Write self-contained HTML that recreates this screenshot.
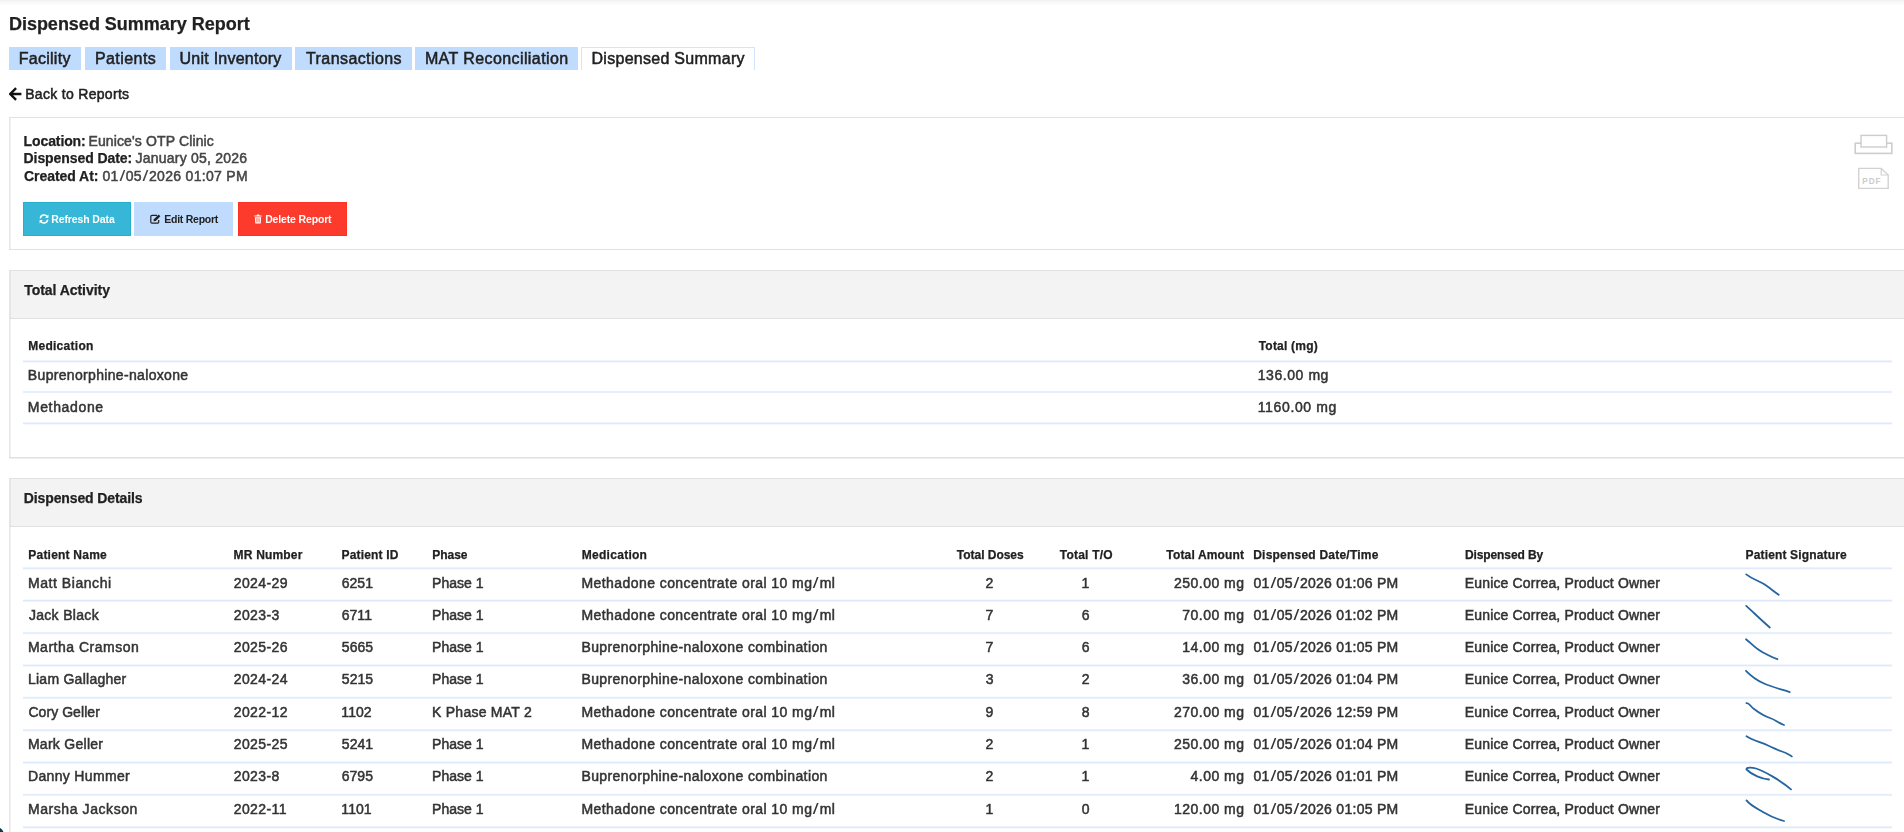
<!DOCTYPE html>
<html lang="en">
<head>
<meta charset="utf-8">
<title>Dispensed Summary Report</title>
<style>
*{box-sizing:border-box;}
html,body{margin:0;padding:0;background:#fff;}
body{width:1904px;height:832px;overflow:hidden;position:relative;font-family:"Liberation Sans",Arial,sans-serif;color:#212121;font-size:14px;}
.t{position:absolute;white-space:nowrap;display:block;-webkit-text-stroke:0.5px;}
.sl{font-style:normal;display:inline-block;text-align:center;transform:scaleX(1.5);letter-spacing:0;-webkit-text-stroke:0;}
.t.b{-webkit-text-stroke:0.25px;font-weight:bold;}
.topstrip{position:absolute;left:0;top:0;width:1904px;height:6px;background:linear-gradient(#f0f0f0 0,#f9f9f9 45%,#ffffff 100%);}
.tab{position:absolute;top:47px;height:23px;line-height:23px;font-size:16px;background:#bfdbfe;color:#212121;text-align:center;white-space:nowrap;}
.tab.active{background:#fff;border:1px solid #d3e5fd;border-bottom:none;line-height:21px;}
.panel{position:absolute;left:9px;width:1920px;border:1px solid #e1e1e1;border-left-color:#e6e6e6;background:#fff;}
.lb{position:absolute;left:0;top:0;bottom:0;width:1px;background:rgba(0,0,0,0.05);z-index:2;}
.phead{position:absolute;left:0;top:0;width:100%;height:48px;background:#f3f3f3;border-bottom:1px solid #e0e0e0;}
.btn{position:absolute;top:202px;height:34px;}
.ln{position:absolute;left:23px;width:1869px;height:1px;}
.ico{position:absolute;}
</style>
</head>
<body>
<div class="topstrip"></div>

<div class="tab" style="left:9px;width:72px;"></div>
<div class="tab" style="left:85px;width:81px;"></div>
<div class="tab" style="left:170px;width:122px;"></div>
<div class="tab" style="left:295px;width:117px;"></div>
<div class="tab" style="left:415px;width:163px;"></div>
<div class="tab active" style="left:581px;width:174px;"></div>

<!-- back arrow -->
<svg class="ico" style="left:9px;top:87px" width="13" height="14" viewBox="0 0 13 14"><path d="M7.1 1.1 L1.2 7 L7.1 12.9 M1.8 7 H12.4" fill="none" stroke="#111" stroke-width="2.4"/></svg>

<!-- Report info panel -->
<div class="panel" style="top:117px;height:133px;"><div class="lb"></div></div>
<div class="btn" style="left:23px;width:108px;background:#36b7d7;border:1px solid #27afd2;"></div>
<div class="btn" style="left:134px;width:99px;background:#bfdbfe;"></div>
<div class="btn" style="left:238px;width:109px;background:#fd3b2c;border:1px solid #fd3224;"></div>

<!-- Total Activity panel -->
<div class="panel" style="top:270px;height:188px;box-shadow:0 1px 0 #f0f0f0;"><div class="phead"></div><div class="lb"></div></div>
<div class="ln" style="top:360px;background:#eff5fe"></div>
<div class="ln" style="top:361px;background:#dde9fc"></div>
<div class="ln" style="top:362px;background:#f4f8fe"></div>
<div class="ln" style="top:390px;background:#fdfeff"></div>
<div class="ln" style="top:391px;background:#e6effd"></div>
<div class="ln" style="top:392px;background:#e6effd"></div>
<div class="ln" style="top:393px;background:#fdfeff"></div>
<div class="ln" style="top:422px;background:#eff5fe"></div>
<div class="ln" style="top:423px;background:#dde9fc"></div>
<div class="ln" style="top:424px;background:#f4f8fe"></div>

<!-- Dispensed Details panel -->
<div class="panel" style="top:478px;height:400px;"><div class="phead"></div><div class="lb"></div></div>
<div class="ln" style="top:567px;background:#edf3fd"></div>
<div class="ln" style="top:568px;background:#dfeafc"></div>
<div class="ln" style="top:569px;background:#f6f9fe"></div>
<div class="ln" style="top:599px;background:#f5f9fe"></div>
<div class="ln" style="top:600px;background:#deeafc"></div>
<div class="ln" style="top:601px;background:#edf4fd"></div>
<div class="ln" style="top:631px;background:#fefeff"></div>
<div class="ln" style="top:632px;background:#e7f0fd"></div>
<div class="ln" style="top:633px;background:#e5eefd"></div>
<div class="ln" style="top:634px;background:#fcfdff"></div>
<div class="ln" style="top:664px;background:#f0f5fe"></div>
<div class="ln" style="top:665px;background:#dce8fc"></div>
<div class="ln" style="top:666px;background:#f3f7fe"></div>
<div class="ln" style="top:696px;background:#f8fbfe"></div>
<div class="ln" style="top:697px;background:#e1ecfc"></div>
<div class="ln" style="top:698px;background:#eaf2fd"></div>
<div class="ln" style="top:729px;background:#eaf1fd"></div>
<div class="ln" style="top:730px;background:#e2ecfc"></div>
<div class="ln" style="top:731px;background:#f9fbfe"></div>
<div class="ln" style="top:761px;background:#f2f7fe"></div>
<div class="ln" style="top:762px;background:#dce8fc"></div>
<div class="ln" style="top:763px;background:#f0f5fe"></div>
<div class="ln" style="top:793px;background:#fbfcff"></div>
<div class="ln" style="top:794px;background:#e4eefd"></div>
<div class="ln" style="top:795px;background:#e8f0fd"></div>
<div class="ln" style="top:826px;background:#edf3fd"></div>
<div class="ln" style="top:827px;background:#dfeafc"></div>
<div class="ln" style="top:828px;background:#f6f9fe"></div>

<div style="position:absolute;left:-12.5px;top:826.6px;width:16.8px;height:16.8px;border-radius:50%;background:#0e3b3f;"></div>
<!-- refresh icon -->
<svg class="ico" style="left:39px;top:214px" width="10" height="10" viewBox="0 0 10 10"><path d="M1.3 4.3 A3.8 3.8 0 0 1 8.2 2.6 M8.7 5.7 A3.8 3.8 0 0 1 1.8 7.4" fill="none" stroke="#fff" stroke-width="1.5"/><path d="M9.4 0.6 V3.9 H6.1 Z M0.6 9.4 V6.1 H3.9 Z" fill="#fff"/></svg>
<!-- edit icon -->
<svg class="ico" style="left:150px;top:214px" width="11" height="10" viewBox="0 0 11 10"><path d="M7 1.3 H2 A1.2 1.2 0 0 0 0.8 2.5 V8 A1.2 1.2 0 0 0 2 9.2 H7.5 A1.2 1.2 0 0 0 8.7 8 V6" fill="none" stroke="#212121" stroke-width="1.2"/><path d="M3.9 5.2 L8.6 0.5 L10.4 2.3 L5.7 7 L3.6 7.3 Z" fill="#212121"/></svg>
<!-- trash icon -->
<svg class="ico" style="left:254px;top:214px" width="8" height="10" viewBox="0 0 8 10"><path d="M0.3 1.5 H2.5 L3 0.6 H5 L5.5 1.5 H7.7 V2.6 H0.3 Z M0.9 3.2 H7.1 L6.7 9.4 H1.3 Z" fill="#fff"/><path d="M2.7 4.2 V8.4 M4 4.2 V8.4 M5.3 4.2 V8.4" stroke="#fe3a2c" stroke-width="0.6"/></svg>
<!-- printer icon -->
<svg class="ico" style="left:1853px;top:133px" width="40" height="22" viewBox="0 0 40 22"><rect x="2.2" y="10.2" width="36.6" height="10.2" fill="#fff" stroke="#cdcdcd" stroke-width="1.6"/><rect x="8" y="2.4" width="25.6" height="11.6" fill="#fff" stroke="#cdcdcd" stroke-width="1.4"/></svg>
<!-- pdf icon -->
<svg class="ico" style="left:1857px;top:167px" width="33" height="23" viewBox="0 0 33 23"><path d="M1.7 1.4 H24.2 L31.2 8 V21.4 H1.7 Z" fill="#fff" stroke="#d2d2d2" stroke-width="1.4"/><path d="M24.2 1.4 V8 H31.2" fill="none" stroke="#d2d2d2" stroke-width="1.2"/><text x="5.2" y="17" font-family="Liberation Sans,Arial,sans-serif" font-weight="bold" font-size="8.2" fill="#cbcbcb" letter-spacing="1">PDF</text></svg>
<!-- signatures -->
<svg class="ico" style="left:1740px;top:570px" width="60" height="262" viewBox="1740 570 60 262" fill="none" stroke="#2565a0" stroke-width="1.8" stroke-linecap="round" stroke-linejoin="round">
<path d="M1746.2 574.4 C1752 579 1758 580.5 1763 583.5 S1772 590 1778.7 594.8"/>
<path d="M1746.2 605.9 C1752 611 1760 619 1769.8 627.5"/>
<path d="M1746 639.2 C1751 643 1755 648.5 1763 652.5 S1771 657 1777.4 659.2"/>
<path d="M1746 670.8 C1751 676 1756 680 1764 683.5 S1780 689 1789.7 692.1"/>
<path d="M1746.5 703.2 C1749 702.5 1750 706 1754 709 S1764 716 1770 718 S1778 723 1784 725"/>
<path d="M1746.5 736.2 C1752 740 1760 742 1768 745.5 S1778 750.5 1782 751.5 S1788 754 1791.8 756.4"/>
<path d="M1769 779.5 C1762 779 1752 775 1746.5 769.5 C1746 767 1752 767.3 1756 768.5 C1764 771 1780 780 1791 789.4"/>
<path d="M1746.5 800.4 C1750 805 1756 808 1762 811.5 S1774 818.5 1784 821"/>
</svg>


<div id="tx" style="position:absolute;left:0;top:0;width:1904px;height:832px;will-change:transform;">
<span class="t b" style="left:8.90px;top:13px;font-size:18px;line-height:23px;color:#212121;letter-spacing:-0.006px;">Dispensed Summary Report</span>
<span class="t" style="left:18.69px;top:48px;font-size:16px;line-height:21px;color:#212121;letter-spacing:0.280px;">Facility</span>
<span class="t" style="left:94.89px;top:48px;font-size:16px;line-height:21px;color:#212121;letter-spacing:0.454px;">Patients</span>
<span class="t" style="left:179.57px;top:48px;font-size:16px;line-height:21px;color:#212121;letter-spacing:0.235px;">Unit Inventory</span>
<span class="t" style="left:306.04px;top:48px;font-size:16px;line-height:21px;color:#212121;letter-spacing:0.412px;">Transactions</span>
<span class="t" style="left:424.89px;top:48px;font-size:16px;line-height:21px;color:#212121;letter-spacing:0.407px;">MAT Reconciliation</span>
<span class="t" style="left:591.49px;top:48px;font-size:16px;line-height:21px;color:#212121;letter-spacing:0.284px;">Dispensed Summary</span>
<span class="t" style="left:25.15px;top:85px;font-size:14px;line-height:18px;color:#212121;letter-spacing:0.311px;">Back to Reports</span>
<span class="t b" style="left:23.56px;top:132px;font-size:14px;line-height:18px;color:#212121;letter-spacing:-0.101px;">Location:</span>
<span class="t" style="left:88.45px;top:132px;font-size:14px;line-height:18px;color:#444;letter-spacing:0.131px;">Eunice's OTP Clinic</span>
<span class="t b" style="left:23.56px;top:149px;font-size:14px;line-height:18px;color:#212121;letter-spacing:-0.080px;">Dispensed Date:</span>
<span class="t" style="left:135.58px;top:149px;font-size:14px;line-height:18px;color:#444;letter-spacing:0.223px;">January 05, 2026</span>
<span class="t b" style="left:23.93px;top:167px;font-size:14px;line-height:18px;color:#212121;letter-spacing:-0.043px;">Created At:</span>
<span class="t" style="left:102.45px;top:167px;font-size:14px;line-height:18px;color:#444;letter-spacing:0.306px;">01<i class="sl" style="width:7.10px">/</i>05<i class="sl" style="width:7.10px">/</i>2026 01:07 PM</span>
<span class="t b" style="left:51.20px;top:212px;font-size:10.5px;line-height:14px;color:#ffffff;-webkit-text-stroke:0;letter-spacing:-0.113px;">Refresh Data</span>
<span class="t b" style="left:164.30px;top:212px;font-size:10.5px;line-height:14px;color:#212121;-webkit-text-stroke:0;letter-spacing:-0.255px;">Edit Report</span>
<span class="t b" style="left:265.20px;top:212px;font-size:10.5px;line-height:14px;color:#ffffff;-webkit-text-stroke:0;letter-spacing:-0.153px;">Delete Report</span>
<span class="t b" style="left:24.24px;top:281px;font-size:14px;line-height:18px;color:#212121;letter-spacing:-0.049px;">Total Activity</span>
<span class="t b" style="left:28.20px;top:338px;font-size:12px;line-height:16px;color:#212121;letter-spacing:0.275px;">Medication</span>
<span class="t b" style="left:1258.67px;top:338px;font-size:12px;line-height:16px;color:#212121;letter-spacing:0.226px;">Total (mg)</span>
<span class="t" style="left:27.85px;top:366px;font-size:14px;line-height:18px;color:#333333;letter-spacing:0.330px;">Buprenorphine-naloxone</span>
<span class="t" style="left:27.85px;top:398px;font-size:14px;line-height:18px;color:#333333;letter-spacing:0.652px;">Methadone</span>
<span class="t" style="left:1257.73px;top:366px;font-size:14px;line-height:18px;color:#333333;letter-spacing:0.564px;">136.00 mg</span>
<span class="t" style="left:1257.73px;top:398px;font-size:14px;line-height:18px;color:#333333;letter-spacing:0.640px;">1160.00 mg</span>
<span class="t b" style="left:23.76px;top:489px;font-size:14px;line-height:18px;color:#212121;letter-spacing:-0.112px;">Dispensed Details</span>
<span class="t b" style="left:28.30px;top:547px;font-size:12px;line-height:16px;color:#212121;letter-spacing:0.217px;">Patient Name</span>
<span class="t b" style="left:233.60px;top:547px;font-size:12px;line-height:16px;color:#212121;letter-spacing:0.181px;">MR Number</span>
<span class="t b" style="left:341.50px;top:547px;font-size:12px;line-height:16px;color:#212121;letter-spacing:0.185px;">Patient ID</span>
<span class="t b" style="left:432.30px;top:547px;font-size:12px;line-height:16px;color:#212121;letter-spacing:-0.036px;">Phase</span>
<span class="t b" style="left:581.80px;top:547px;font-size:12px;line-height:16px;color:#212121;letter-spacing:0.275px;">Medication</span>
<span class="t b" style="left:956.77px;top:547px;font-size:12px;line-height:16px;color:#212121;letter-spacing:-0.020px;">Total Doses</span>
<span class="t b" style="left:1059.77px;top:547px;font-size:12px;line-height:16px;color:#212121;letter-spacing:0.229px;">Total T/O</span>
<span class="t b" style="left:1166.37px;top:547px;font-size:12px;line-height:16px;color:#212121;letter-spacing:0.150px;">Total Amount</span>
<span class="t b" style="left:1253.20px;top:547px;font-size:12px;line-height:16px;color:#212121;letter-spacing:0.225px;">Dispensed Date/Time</span>
<span class="t b" style="left:1464.90px;top:547px;font-size:12px;line-height:16px;color:#212121;letter-spacing:-0.099px;">Dispensed By</span>
<span class="t b" style="left:1745.50px;top:547px;font-size:12px;line-height:16px;color:#212121;letter-spacing:0.158px;">Patient Signature</span>
<span class="t" style="left:27.95px;top:574px;font-size:14px;line-height:18px;color:#333333;letter-spacing:0.560px;">Matt Bianchi</span>
<span class="t" style="left:233.70px;top:574px;font-size:14px;line-height:18px;color:#333333;letter-spacing:0.420px;">2024-29</span>
<span class="t" style="left:341.69px;top:574px;font-size:14px;line-height:18px;color:#333333;letter-spacing:0.050px;">6251</span>
<span class="t" style="left:432.05px;top:574px;font-size:14px;line-height:18px;color:#333333;letter-spacing:0.027px;">Phase 1</span>
<span class="t" style="left:581.45px;top:574px;font-size:14px;line-height:18px;color:#333333;letter-spacing:0.432px;">Methadone concentrate oral 10 mg<i class="sl" style="width:7.22px">/</i>ml</span>
<span class="t" style="left:985.61px;top:574px;font-size:14px;line-height:18px;color:#333333;">2</span>
<span class="t" style="left:1081.52px;top:574px;font-size:14px;line-height:18px;color:#333333;">1</span>
<span class="t" style="left:1174.00px;top:574px;font-size:14px;line-height:18px;color:#333333;letter-spacing:0.480px;">250.00 mg</span>
<span class="t" style="left:1253.45px;top:574px;font-size:14px;line-height:18px;color:#333333;letter-spacing:0.284px;">01<i class="sl" style="width:7.08px">/</i>05<i class="sl" style="width:7.08px">/</i>2026 01:06 PM</span>
<span class="t" style="left:1464.75px;top:574px;font-size:14px;line-height:18px;color:#333333;letter-spacing:0.164px;">Eunice Correa, Product Owner</span>
<span class="t" style="left:28.88px;top:606px;font-size:14px;line-height:18px;color:#333333;letter-spacing:0.321px;">Jack Black</span>
<span class="t" style="left:233.70px;top:606px;font-size:14px;line-height:18px;color:#333333;letter-spacing:0.420px;">2023-3</span>
<span class="t" style="left:341.69px;top:606px;font-size:14px;line-height:18px;color:#333333;letter-spacing:0.050px;">6711</span>
<span class="t" style="left:432.05px;top:606px;font-size:14px;line-height:18px;color:#333333;letter-spacing:0.027px;">Phase 1</span>
<span class="t" style="left:581.45px;top:606px;font-size:14px;line-height:18px;color:#333333;letter-spacing:0.432px;">Methadone concentrate oral 10 mg<i class="sl" style="width:7.22px">/</i>ml</span>
<span class="t" style="left:985.60px;top:606px;font-size:14px;line-height:18px;color:#333333;">7</span>
<span class="t" style="left:1081.66px;top:606px;font-size:14px;line-height:18px;color:#333333;">6</span>
<span class="t" style="left:1182.27px;top:606px;font-size:14px;line-height:18px;color:#333333;letter-spacing:0.480px;">70.00 mg</span>
<span class="t" style="left:1253.45px;top:606px;font-size:14px;line-height:18px;color:#333333;letter-spacing:0.284px;">01<i class="sl" style="width:7.08px">/</i>05<i class="sl" style="width:7.08px">/</i>2026 01:02 PM</span>
<span class="t" style="left:1464.75px;top:606px;font-size:14px;line-height:18px;color:#333333;letter-spacing:0.164px;">Eunice Correa, Product Owner</span>
<span class="t" style="left:27.95px;top:638px;font-size:14px;line-height:18px;color:#333333;letter-spacing:0.508px;">Martha Cramson</span>
<span class="t" style="left:233.70px;top:638px;font-size:14px;line-height:18px;color:#333333;letter-spacing:0.420px;">2025-26</span>
<span class="t" style="left:341.84px;top:638px;font-size:14px;line-height:18px;color:#333333;letter-spacing:0.050px;">5665</span>
<span class="t" style="left:432.05px;top:638px;font-size:14px;line-height:18px;color:#333333;letter-spacing:0.027px;">Phase 1</span>
<span class="t" style="left:581.45px;top:638px;font-size:14px;line-height:18px;color:#333333;letter-spacing:0.401px;">Buprenorphine-naloxone combination</span>
<span class="t" style="left:985.60px;top:638px;font-size:14px;line-height:18px;color:#333333;">7</span>
<span class="t" style="left:1081.66px;top:638px;font-size:14px;line-height:18px;color:#333333;">6</span>
<span class="t" style="left:1182.27px;top:638px;font-size:14px;line-height:18px;color:#333333;letter-spacing:0.480px;">14.00 mg</span>
<span class="t" style="left:1253.45px;top:638px;font-size:14px;line-height:18px;color:#333333;letter-spacing:0.284px;">01<i class="sl" style="width:7.08px">/</i>05<i class="sl" style="width:7.08px">/</i>2026 01:05 PM</span>
<span class="t" style="left:1464.75px;top:638px;font-size:14px;line-height:18px;color:#333333;letter-spacing:0.164px;">Eunice Correa, Product Owner</span>
<span class="t" style="left:27.95px;top:670px;font-size:14px;line-height:18px;color:#333333;letter-spacing:0.257px;">Liam Gallagher</span>
<span class="t" style="left:233.70px;top:670px;font-size:14px;line-height:18px;color:#333333;letter-spacing:0.420px;">2024-24</span>
<span class="t" style="left:341.84px;top:670px;font-size:14px;line-height:18px;color:#333333;letter-spacing:0.050px;">5215</span>
<span class="t" style="left:432.05px;top:670px;font-size:14px;line-height:18px;color:#333333;letter-spacing:0.027px;">Phase 1</span>
<span class="t" style="left:581.45px;top:670px;font-size:14px;line-height:18px;color:#333333;letter-spacing:0.401px;">Buprenorphine-naloxone combination</span>
<span class="t" style="left:985.65px;top:670px;font-size:14px;line-height:18px;color:#333333;">3</span>
<span class="t" style="left:1081.71px;top:670px;font-size:14px;line-height:18px;color:#333333;">2</span>
<span class="t" style="left:1182.27px;top:670px;font-size:14px;line-height:18px;color:#333333;letter-spacing:0.480px;">36.00 mg</span>
<span class="t" style="left:1253.45px;top:670px;font-size:14px;line-height:18px;color:#333333;letter-spacing:0.284px;">01<i class="sl" style="width:7.08px">/</i>05<i class="sl" style="width:7.08px">/</i>2026 01:04 PM</span>
<span class="t" style="left:1464.75px;top:670px;font-size:14px;line-height:18px;color:#333333;letter-spacing:0.164px;">Eunice Correa, Product Owner</span>
<span class="t" style="left:28.39px;top:703px;font-size:14px;line-height:18px;color:#333333;letter-spacing:0.065px;">Cory Geller</span>
<span class="t" style="left:233.70px;top:703px;font-size:14px;line-height:18px;color:#333333;letter-spacing:0.420px;">2022-12</span>
<span class="t" style="left:341.33px;top:703px;font-size:14px;line-height:18px;color:#333333;letter-spacing:0.050px;">1102</span>
<span class="t" style="left:432.05px;top:703px;font-size:14px;line-height:18px;color:#333333;letter-spacing:0.246px;">K Phase MAT 2</span>
<span class="t" style="left:581.45px;top:703px;font-size:14px;line-height:18px;color:#333333;letter-spacing:0.432px;">Methadone concentrate oral 10 mg<i class="sl" style="width:7.22px">/</i>ml</span>
<span class="t" style="left:985.61px;top:703px;font-size:14px;line-height:18px;color:#333333;">9</span>
<span class="t" style="left:1081.71px;top:703px;font-size:14px;line-height:18px;color:#333333;">8</span>
<span class="t" style="left:1174.00px;top:703px;font-size:14px;line-height:18px;color:#333333;letter-spacing:0.480px;">270.00 mg</span>
<span class="t" style="left:1253.45px;top:703px;font-size:14px;line-height:18px;color:#333333;letter-spacing:0.284px;">01<i class="sl" style="width:7.08px">/</i>05<i class="sl" style="width:7.08px">/</i>2026 12:59 PM</span>
<span class="t" style="left:1464.75px;top:703px;font-size:14px;line-height:18px;color:#333333;letter-spacing:0.164px;">Eunice Correa, Product Owner</span>
<span class="t" style="left:27.95px;top:735px;font-size:14px;line-height:18px;color:#333333;letter-spacing:0.274px;">Mark Geller</span>
<span class="t" style="left:233.70px;top:735px;font-size:14px;line-height:18px;color:#333333;letter-spacing:0.420px;">2025-25</span>
<span class="t" style="left:341.84px;top:735px;font-size:14px;line-height:18px;color:#333333;letter-spacing:0.050px;">5241</span>
<span class="t" style="left:432.05px;top:735px;font-size:14px;line-height:18px;color:#333333;letter-spacing:0.027px;">Phase 1</span>
<span class="t" style="left:581.45px;top:735px;font-size:14px;line-height:18px;color:#333333;letter-spacing:0.432px;">Methadone concentrate oral 10 mg<i class="sl" style="width:7.22px">/</i>ml</span>
<span class="t" style="left:985.61px;top:735px;font-size:14px;line-height:18px;color:#333333;">2</span>
<span class="t" style="left:1081.52px;top:735px;font-size:14px;line-height:18px;color:#333333;">1</span>
<span class="t" style="left:1174.00px;top:735px;font-size:14px;line-height:18px;color:#333333;letter-spacing:0.480px;">250.00 mg</span>
<span class="t" style="left:1253.45px;top:735px;font-size:14px;line-height:18px;color:#333333;letter-spacing:0.284px;">01<i class="sl" style="width:7.08px">/</i>05<i class="sl" style="width:7.08px">/</i>2026 01:04 PM</span>
<span class="t" style="left:1464.75px;top:735px;font-size:14px;line-height:18px;color:#333333;letter-spacing:0.164px;">Eunice Correa, Product Owner</span>
<span class="t" style="left:27.95px;top:767px;font-size:14px;line-height:18px;color:#333333;letter-spacing:0.341px;">Danny Hummer</span>
<span class="t" style="left:233.70px;top:767px;font-size:14px;line-height:18px;color:#333333;letter-spacing:0.420px;">2023-8</span>
<span class="t" style="left:341.69px;top:767px;font-size:14px;line-height:18px;color:#333333;letter-spacing:0.050px;">6795</span>
<span class="t" style="left:432.05px;top:767px;font-size:14px;line-height:18px;color:#333333;letter-spacing:0.027px;">Phase 1</span>
<span class="t" style="left:581.45px;top:767px;font-size:14px;line-height:18px;color:#333333;letter-spacing:0.401px;">Buprenorphine-naloxone combination</span>
<span class="t" style="left:985.61px;top:767px;font-size:14px;line-height:18px;color:#333333;">2</span>
<span class="t" style="left:1081.52px;top:767px;font-size:14px;line-height:18px;color:#333333;">1</span>
<span class="t" style="left:1190.54px;top:767px;font-size:14px;line-height:18px;color:#333333;letter-spacing:0.480px;">4.00 mg</span>
<span class="t" style="left:1253.45px;top:767px;font-size:14px;line-height:18px;color:#333333;letter-spacing:0.284px;">01<i class="sl" style="width:7.08px">/</i>05<i class="sl" style="width:7.08px">/</i>2026 01:01 PM</span>
<span class="t" style="left:1464.75px;top:767px;font-size:14px;line-height:18px;color:#333333;letter-spacing:0.164px;">Eunice Correa, Product Owner</span>
<span class="t" style="left:27.95px;top:800px;font-size:14px;line-height:18px;color:#333333;letter-spacing:0.579px;">Marsha Jackson</span>
<span class="t" style="left:233.70px;top:800px;font-size:14px;line-height:18px;color:#333333;letter-spacing:0.420px;">2022-11</span>
<span class="t" style="left:341.33px;top:800px;font-size:14px;line-height:18px;color:#333333;letter-spacing:0.050px;">1101</span>
<span class="t" style="left:432.05px;top:800px;font-size:14px;line-height:18px;color:#333333;letter-spacing:0.027px;">Phase 1</span>
<span class="t" style="left:581.45px;top:800px;font-size:14px;line-height:18px;color:#333333;letter-spacing:0.432px;">Methadone concentrate oral 10 mg<i class="sl" style="width:7.22px">/</i>ml</span>
<span class="t" style="left:985.42px;top:800px;font-size:14px;line-height:18px;color:#333333;">1</span>
<span class="t" style="left:1081.71px;top:800px;font-size:14px;line-height:18px;color:#333333;">0</span>
<span class="t" style="left:1174.00px;top:800px;font-size:14px;line-height:18px;color:#333333;letter-spacing:0.480px;">120.00 mg</span>
<span class="t" style="left:1253.45px;top:800px;font-size:14px;line-height:18px;color:#333333;letter-spacing:0.284px;">01<i class="sl" style="width:7.08px">/</i>05<i class="sl" style="width:7.08px">/</i>2026 01:05 PM</span>
<span class="t" style="left:1464.75px;top:800px;font-size:14px;line-height:18px;color:#333333;letter-spacing:0.164px;">Eunice Correa, Product Owner</span>
</div>
</body>
</html>
